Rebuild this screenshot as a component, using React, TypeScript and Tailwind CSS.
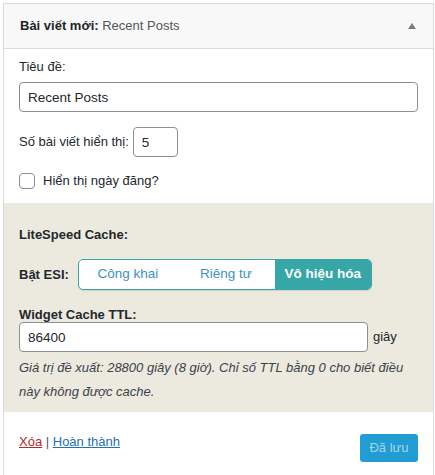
import React, { useState } from 'react';

const font = { fontFamily: '"Liberation Sans", Arial, "Noto Sans", sans-serif' };

export default function App() {
  const [esi, setEsi] = useState('disable');
  const [showDate, setShowDate] = useState(false);

  const segments = [
    { key: 'public', label: 'Công khai' },
    { key: 'private', label: 'Riêng tư' },
    { key: 'disable', label: 'Vô hiệu hóa' },
  ];

  return (
    <div className="w-[435px] h-[475px] overflow-hidden bg-white pt-[3px] pl-[3px] pr-[1px] text-[13px] text-[#23282d]" style={font}>
      <div className="border border-[#dcdcde] h-[480px] bg-white">
        {/* Header */}
        <div className="h-[45px] bg-[#f8f8f8] border-b border-[#dcdcde] flex items-center justify-between pl-[16px] pr-[17px]">
          <h3 className="text-[13px]">
            <span className="font-semibold text-[#1d2327]">Bài viết mới:</span>{' '}
            <span className="text-[#50575e]">Recent Posts</span>
          </h3>
          <svg width="8" height="6" viewBox="0 0 8 6">
            <path d="M4 0 L8 6 L0 6 Z" fill="#787c82" />
          </svg>
        </div>

        {/* Body */}
        <div className="px-[15px] pt-[9px] pb-[14px]">
          <label className="block leading-[18px]">Tiêu đề:</label>
          <input
            defaultValue="Recent Posts"
            className="mt-[6px] block w-full h-[30px] border border-[#8c8f94] rounded-[4px] px-[8px] text-[13.5px] outline-none"
          />
          <div className="mt-[15px] flex items-center gap-[4px]">
            <span>Số bài viết hiển thị:</span>
            <input
              defaultValue="5"
              className="w-[45px] h-[30px] border border-[#8c8f94] rounded-[4px] px-[8px] text-[13.5px] outline-none"
            />
          </div>
          <label className="mt-[16px] flex items-center gap-[8px] h-[16px]">
            <span
              onClick={() => setShowDate(!showDate)}
              className="w-[16px] h-[16px] border border-[#8c8f94] rounded-[4px] bg-white"
            />
            <span>Hiển thị ngày đăng?</span>
          </label>
        </div>

        {/* LiteSpeed */}
        <div className="bg-[#ece9df] px-[15px] pt-[23px] pb-[8px]">
          <div className="font-semibold leading-[18px]">LiteSpeed Cache:</div>
          <div className="mt-[15px] flex items-center gap-[9px]">
            <span className="font-semibold">Bật ESI:</span>
            <div className="flex h-[31px] rounded-[5px] border border-[#36a6a6] bg-white overflow-hidden shadow-[0_1px_1px_rgba(0,0,0,0.1)]">
              {segments.map((s) => (
                <button
                  key={s.key}
                  onClick={() => setEsi(s.key)}
                  className={
                    esi === s.key
                      ? 'w-[96px] bg-[#36a6a6] text-white font-semibold text-[13.5px]'
                      : 'w-[98px] text-[#3e8fc0] text-[13.5px]'
                  }
                >
                  {s.label}
                </button>
              ))}
            </div>
          </div>
          <div className="mt-[17px] font-semibold leading-[15px]">Widget Cache TTL:</div>
          <div className="flex items-center gap-[5px]">
            <input
              defaultValue="86400"
              className="w-[349px] h-[30px] border border-[#8c8f94] rounded-[4px] px-[8px] text-[13.5px] bg-white outline-none"
            />
            <span>giây</span>
          </div>
          <p className="mt-[4px] italic leading-[24px] text-[#3c434a]">
            Giá trị đề xuất: 28800 giây (8 giờ). Chỉ số TTL bằng 0 cho biết điều này không được cache.
          </p>
        </div>

        {/* Footer */}
        <div className="px-[15px] flex items-start justify-between">
          <div className="mt-[21px] leading-[18px]">
            <a href="#" className="text-[#b32d2e] underline">Xóa</a>
            <span className="text-[#50575e]"> | </span>
            <a href="#" className="text-[#2271b1] underline">Hoàn thành</a>
          </div>
          <button className="mt-[22px] h-[28px] w-[58px] rounded-[3px] bg-[#219dd4] text-[#a3d5ed] text-[13px]">
            Đã lưu
          </button>
        </div>
      </div>
    </div>
  );
}
